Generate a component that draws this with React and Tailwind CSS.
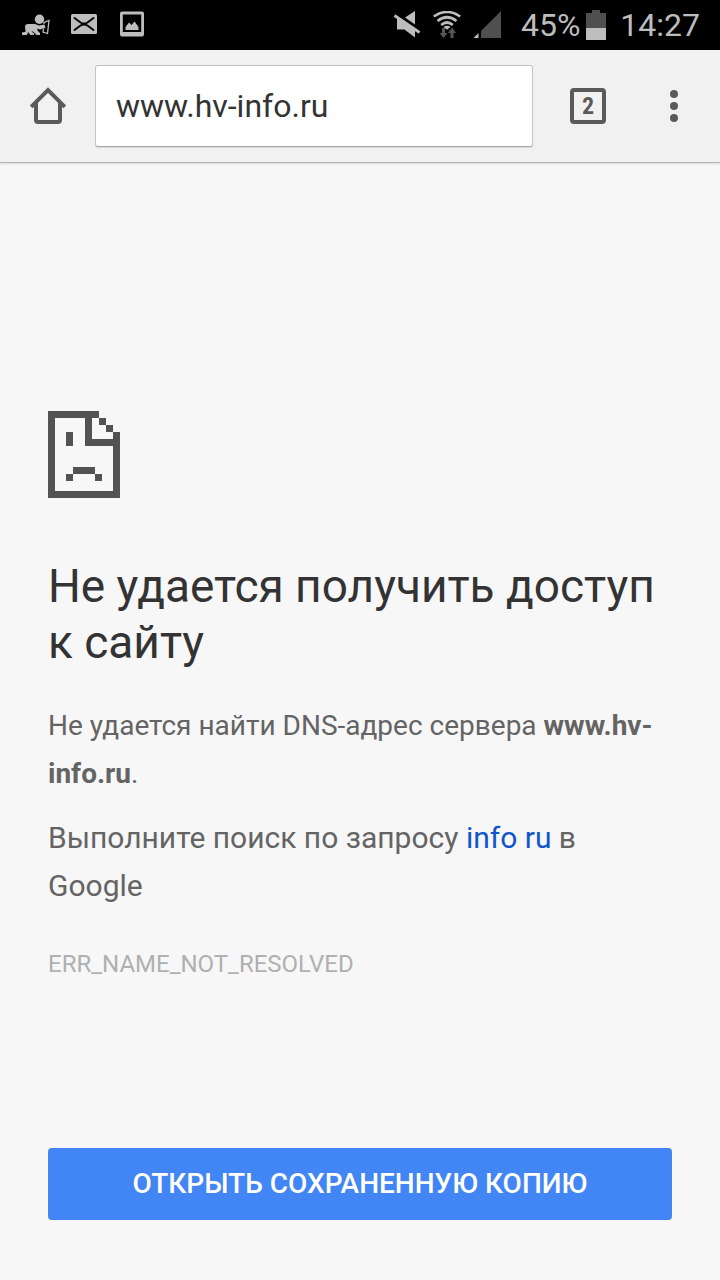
import React, { useState } from 'react';

const StatusBar = () => (
  <div className="flex h-[50px] items-center justify-between bg-black pl-[22px] pr-5 text-[#bdbdbd]">
    <div className="flex items-center gap-5">
      {/* Crawling figure with a bucket */}
      <svg className="h-7 w-7" viewBox="0 0 28 28" fill="currentColor">
        <circle cx="17.5" cy="8.3" r="4.7" />
        <path d="M3 15Q3.5 13 6 13h7l4 1.5 5.5-1 1 3.5-5.5 1.5-2.5-1v2l2.5 2.5v2h-3.5l-3.5-3.5h-1.500l2.500 2V24H8.500l-2.500-3-1 3H0v-2.600l3.500-.7z" />
        <path d="M22 13v-1.5l5-2-1.5 13-4.5-1.500.5-3" fill="none" stroke="currentColor" strokeWidth="1.3" />
      </svg>
      <svg className="h-7 w-7" viewBox="0 0 28 28">
        <rect x="1" y="3" width="26" height="20" rx="1.5" fill="currentColor" />
        <path d="M4.5 7l6 4.500q3.500 2.200 7 0l6-4.500M4.500 19l6-4.500q3.500-2.200 7 0l6 4.500" fill="none" stroke="#000" strokeWidth="2" strokeLinecap="round" />
      </svg>
      <svg className="h-7 w-7" viewBox="0 0 28 28">
        <path d="M4 .5h20q2 0 2 2v21q0 2-2 2H4q-2 0-2-2v-21q0-2 2-2zM4.800 3.500v17.500h18.400V3.500z" fill="currentColor" fillRule="evenodd" />
        <path d="M7.500 19v-3l3.500-4.500 2.500 2.500 3-3.500 4 5.500v3z" fill="currentColor" />
      </svg>
    </div>

    <div className="flex items-center">
      <svg className="mr-3 h-7 w-7" viewBox="0 0 28 28" fill="currentColor">
        <path d="M12 6.500L22 0v13.500zM4 7l18 12.500v7L11.500 18.500H4z" />
        <path d="M1.500 4.500L26.500 21.500" stroke="currentColor" strokeWidth="2.800" />
      </svg>
      <svg className="mr-3 h-7 w-7" viewBox="0 0 28 28" fill="none" stroke="currentColor" strokeWidth="2.700">
        <path d="M.8 5.500q13.200-9 26.400 0M4.500 10q9.500-7.500 19 0M8.200 14q5.800-5 11.600 0" />
        <path d="M10.500 16q3.500-2.500 7 0L14 18.800z" fill="currentColor" stroke="none" />
        <path d="M9 17h3v5h2.500L10.500 27l-4-5H9zM17.500 27v-5H15l4-5.500 4 5.500h-2.500v5z" fill="#555" stroke="none" />
      </svg>
      <svg className="mr-5 h-7 w-7" viewBox="0 0 28 28">
        <path d="M28 0v27H8V20z" fill="#4f4f4f" />
        <path d="M5.500 22v5H.5z" fill="currentColor" />
      </svg>
      <span className="mr-1.5 text-[32px] leading-[50px]">45%</span>
      <svg className="mr-3.5 h-[30px] w-5" viewBox="0 0 20 30">
        <path d="M6 0h8v3h6v15H0V3h6z" fill="#4f4f4f" />
        <path d="M0 18h20v12H0z" fill="currentColor" />
      </svg>
      <span className="text-[32px] leading-[50px]">14:27</span>
    </div>
  </div>
);

const SadPage = () => (
  <svg className="h-[87px] w-[72px]" viewBox="0 0 72 87" fill="#535353" shapeRendering="crispEdges">
    <path d="M0 0h51v7h-7v21h21v-7h7v66H0zM7 7v73h58V35H37V7z" fillRule="evenodd" />
    <path d="M51 7h7v7h-7zM58 14h7v7h-7zM18 21h7v14h-7zM25 56h22v7H25zM18 63h7v7h-7zM47 63h7v7h-7z" />
  </svg>
);

const Toolbar = () => {
  const [url, setUrl] = useState('www.hv-info.ru');

  return (
    <header className="flex h-[113px] items-center border-b border-[#b5b5b5] bg-[#f1f1f1] pl-[29px] pr-7 shadow-[0_1px_2px_rgba(0,0,0,0.12)]">
      <button type="button" aria-label="Главная страница" className="shrink-0">
        <svg className="h-[38px] w-[38px]" viewBox="0 0 38 38" fill="none" stroke="#5a5a5a" strokeWidth="4">
          <path d="M2.200 19.800L19 3l16.800 16.800" />
          <path d="M7 16v17q0 2 2 2h20q2 0 2-2V16" />
        </svg>
      </button>
      <input
        type="text"
        aria-label="Адрес"
        value={url}
        onChange={(e) => setUrl(e.target.value)}
        className="ml-7 h-[82px] min-w-0 flex-1 rounded-[3px] border border-[#c4c4c4] border-b-[#a8a8a8] bg-white px-5 text-[32px] text-[#333] shadow-[0_1px_1px_rgba(0,0,0,0.1)] outline-none"
      />
      <button
        type="button"
        aria-label="Вкладки: 2"
        className="ml-[37px] flex h-9 w-9 shrink-0 items-center justify-center rounded-[4px] border-4 border-[#5a5a5a] font-['Roboto_Condensed',Roboto,sans-serif] text-2xl font-bold text-[#5a5a5a]"
      >
        2
      </button>
      <button type="button" aria-label="Меню" className="ml-[50px] flex w-9 shrink-0 justify-center">
        <svg className="h-8 w-2" viewBox="0 0 8 32" fill="#5a5a5a">
          <circle cx="4" cy="4" r="4" />
          <circle cx="4" cy="16" r="4" />
          <circle cx="4" cy="28" r="4" />
        </svg>
      </button>
    </header>
  );
};

const App = () => {
  return (
    <div className="flex min-h-screen flex-col bg-[#f7f7f7] font-[Roboto,sans-serif]">
      <StatusBar />
      <Toolbar />

      <main className="flex flex-1 flex-col px-12 pb-[60px] pt-[248px] text-[30px] leading-[48px] text-[#646464]">
        <SadPage />
        <h1 className="mt-[60px] text-[46px] leading-[56px] text-[#333]">
          Не удается получить доступ к сайту
        </h1>
        <p className="mt-8 text-[28px]">
          Не удается найти DNS-адрес сервера <strong className="font-bold">www.hv-info.ru</strong>.
        </p>
        <p className="mt-4">
          Выполните поиск по запросу <a href="#search" className="text-[#1155cc]">info ru</a> в Google
        </p>
        <p className="mt-9 text-2xl leading-9 text-[#b0b0b0]">ERR_NAME_NOT_RESOLVED</p>

        <button
          type="button"
          className="mt-auto h-[72px] w-full shrink-0 rounded-[4px] bg-[#4285f4] text-[28px] font-medium uppercase text-white"
        >
          Открыть сохраненную копию
        </button>
      </main>
    </div>
  );
};

export default App;
